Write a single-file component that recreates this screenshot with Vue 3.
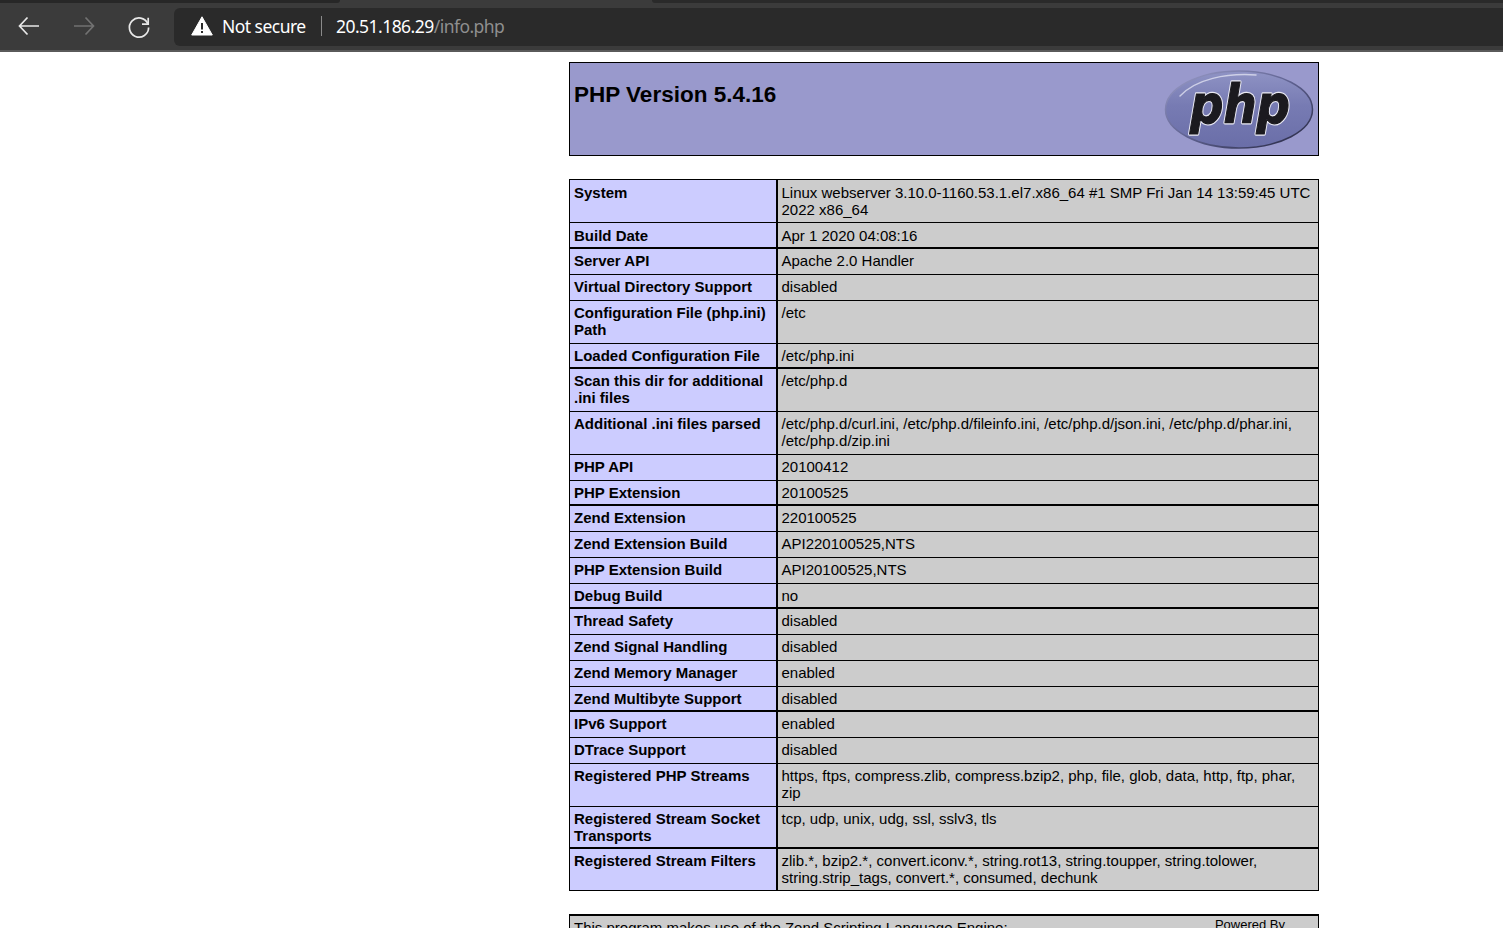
<script setup>
const rows = [
  { k: 'System', v: 'Linux webserver 3.10.0-1160.53.1.el7.x86_64 #1 SMP Fri Jan 14 13:59:45 UTC 2022 x86_64', h: 43 },
  { k: 'Build Date', v: 'Apr 1 2020 04:08:16', h: 25, thick: true },
  { k: 'Server API', v: 'Apache 2.0 Handler', h: 27 },
  { k: 'Virtual Directory Support', v: 'disabled', h: 26 },
  { k: 'Configuration File (php.ini) Path', v: '/etc', h: 43 },
  { k: 'Loaded Configuration File', v: '/etc/php.ini', h: 24, thick: true },
  { k: 'Scan this dir for additional .ini files', v: '/etc/php.d', h: 44 },
  { k: 'Additional .ini files parsed', v: '/etc/php.d/curl.ini, /etc/php.d/fileinfo.ini, /etc/php.d/json.ini, /etc/php.d/phar.ini, /etc/php.d/zip.ini', h: 43 },
  { k: 'PHP API', v: '20100412', h: 26 },
  { k: 'PHP Extension', v: '20100525', h: 24, thick: true },
  { k: 'Zend Extension', v: '220100525', h: 27 },
  { k: 'Zend Extension Build', v: 'API220100525,NTS', h: 26 },
  { k: 'PHP Extension Build', v: 'API20100525,NTS', h: 26 },
  { k: 'Debug Build', v: 'no', h: 24, thick: true },
  { k: 'Thread Safety', v: 'disabled', h: 27 },
  { k: 'Zend Signal Handling', v: 'disabled', h: 26 },
  { k: 'Zend Memory Manager', v: 'enabled', h: 26 },
  { k: 'Zend Multibyte Support', v: 'disabled', h: 24, thick: true },
  { k: 'IPv6 Support', v: 'enabled', h: 27 },
  { k: 'DTrace Support', v: 'disabled', h: 26 },
  { k: 'Registered PHP Streams', v: 'https, ftps, compress.zlib, compress.bzip2, php, file, glob, data, http, ftp, phar, zip', h: 43 },
  { k: 'Registered Stream Socket Transports', v: 'tcp, udp, unix, udg, ssl, sslv3, tls', h: 41, thick: true },
  { k: 'Registered Stream Filters', v: 'zlib.*, bzip2.*, convert.iconv.*, string.rot13, string.toupper, string.tolower, string.strip_tags, convert.*, consumed, dechunk', h: 43 },
]
</script>

<template>
  <div class="page">
    <header class="chrome">
      <div class="strip">
        <div class="tab-a"></div>
        <div class="tab-gap"></div>
        <div class="tab-b"></div>
      </div>
      <div class="toolbar">
        <svg class="nav" width="30" height="30" viewBox="0 0 30 30" fill="none" stroke="#e8e8e8" stroke-width="1.7">
          <path d="M25 15H5.500M13.500 6.500 5.500 15l8 8.500" />
        </svg>
        <svg class="nav" width="30" height="30" viewBox="0 0 30 30" fill="none" stroke="#727272" stroke-width="1.7">
          <path d="M5 15h19.500M16.500 6.500l8 8.500-8 8.500" />
        </svg>
        <svg class="nav" width="30" height="30" viewBox="0 0 30 30" fill="none" stroke="#e8e8e8" stroke-width="1.7">
          <path d="M23.800 12.700A9.600 9.600 0 1 0 24.600 16.500" />
          <path d="M24.200 6.800v6.300H18" />
        </svg>
        <div class="omnibox">
          <svg class="warn" width="22" height="20" viewBox="0 0 22 20">
            <path d="M11 .8 21.300 19H.7z" fill="#fff" stroke="#fff" stroke-linejoin="round" />
            <path d="M10 7h2v6.500h-2zM10 15h2v2h-2z" fill="#2a2a2a" />
          </svg>
          <span class="secure">Not secure</span>
          <span class="sep"></span>
          <span class="url">20.51.186.29<span class="path">/info.php</span></span>
        </div>
      </div>
      <div class="edge"></div>
    </header>

    <main class="center">
      <table class="head">
        <tbody>
          <tr>
            <td>
              <div class="head-in">
                <h1>PHP Version 5.4.16</h1>
                <svg class="logo" width="150" height="80" viewBox="0 0 150 80">
                  <defs>
                    <linearGradient id="egg" x1="0" y1="0" x2="0" y2="1">
                      <stop offset="0" stop-color="#8f93c4" />
                      <stop offset="0.45" stop-color="#777bb3" />
                      <stop offset="1" stop-color="#6a6ea8" />
                    </linearGradient>
                    <linearGradient id="rim" x1="0" y1="0" x2="1" y2="1">
                      <stop offset="0" stop-color="#9d9fcb" />
                      <stop offset="0.5" stop-color="#5e6190" />
                      <stop offset="1" stop-color="#23243d" />
                    </linearGradient>
                  </defs>
                  <ellipse cx="75" cy="39.500" rx="73.500" ry="38.500" fill="url(#egg)" stroke="url(#rim)" stroke-width="1.500" />
                  <path d="M16 26C32 9 62 3 92 5" fill="none" stroke="#dfe0f0" stroke-width="1.500" stroke-linecap="round" opacity="0.8" />
                  <text class="logo-back" x="26" y="53" textLength="100" lengthAdjust="spacingAndGlyphs">php</text>
                  <text class="logo-word" x="26" y="53" textLength="100" lengthAdjust="spacingAndGlyphs">php</text>
                </svg>
              </div>
            </td>
          </tr>
        </tbody>
      </table>

      <table class="info">
        <colgroup>
          <col class="c1" />
          <col />
        </colgroup>
        <tbody>
          <tr v-for="r in rows" :key="r.k" :class="{ thick: r.thick }" :style="{ height: r.h + 'px' }">
            <td class="e">{{ r.k }}</td>
            <td class="v">{{ r.v }}</td>
          </tr>
        </tbody>
      </table>

      <div class="foot">
        <div class="foot-text">This program makes use of the Zend Scripting Language Engine:<br />Zend Engine v2.4.0, Copyright (c) 1998-2013 Zend Technologies</div>
        <div class="foot-side">Powered By</div>
      </div>
    </main>
  </div>
</template>

<style>
html, body {
  margin: 0;
  background: #fff;
  overflow: hidden;
}
</style>

<style scoped>
.page {
  height: 928px;
  overflow: hidden;
  background: #fff;
}

.chrome {
  background: #3b3b3b;
  height: 52px;
  display: flex;
  flex-direction: column;
}
.strip {
  display: flex;
  height: 3px;
  flex: none;
}
.tab-a { width: 340px; background: #272727; border-bottom-right-radius: 3px; }
.tab-gap { width: 312px; }
.tab-b { flex: 1; background: #2a2a2a; border-bottom-left-radius: 3px; }
.toolbar {
  flex: 1;
  display: flex;
  align-items: flex-start;
  padding: 5px 0 0 14px;
}
.nav { flex: none; margin-top: 3px; margin-right: 25px; }
.nav:nth-child(3) { margin-right: 20px; }
.omnibox {
  flex: 1;
  height: 38px;
  box-sizing: border-box;
  padding-bottom: 2px;
  background: #2a2a2a;
  border-radius: 6px 0 0 6px;
  display: flex;
  align-items: center;
  font-family: "Noto Sans", "Open Sans", sans-serif;
  font-size: 17.500px;
  letter-spacing: -0.54px;
  color: #fff;
}
.warn { margin-left: 17px; flex: none; }
.secure { margin-left: 9px; width: 84px; white-space: nowrap; }
.sep { width: 1px; height: 20px; background: #8a8a8a; margin: 0 14px 0 15px; flex: none; }
.url { white-space: nowrap; }
.path { color: #8f8f8f; }
.edge { height: 2px; background: #5a5a5a; flex: none; }

.center {
  width: 750px;
  margin-left: 569px;
  font-family: "Liberation Sans", Arial, sans-serif;
  font-size: 15px;
  line-height: 17px;
  color: #000;
}

table {
  border-collapse: collapse;
  width: 750px;
  table-layout: fixed;
}
td {
  border: 1px solid #000;
  padding: 3px 4px 0 4px;
  vertical-align: top;
}
.info tr:nth-child(-n+2) td { padding-top: 4px; }

.head { margin-top: 10px; }
.head td {
  background: #9999cc;
  padding: 0;
  height: 92px;
}
.head-in {
  display: flex;
  justify-content: space-between;
  align-items: flex-start;
  padding: 0 4px 0 4px;
}
h1 {
  margin: 18px 0 0;
  font-size: 22.500px;
  line-height: 28px;
  font-weight: bold;
}
.logo { display: block; margin-top: 7px; }
.logo-word, .logo-back {
  font-family: "DejaVu Sans", sans-serif;
  font-weight: bold;
  font-style: italic;
  font-size: 54px;
}
.logo-back {
  fill: #e8e8f2;
  stroke: #e8e8f2;
  stroke-width: 3.500px;
  stroke-linejoin: round;
}
.logo-word {
  fill: #1b1a1f;
  stroke: #1b1a1f;
  stroke-width: 1.200px;
}

.info { margin-top: 23px; }
.c1 { width: 207px; }
.e { background: #ccccff; font-weight: bold; border-right-width: 2px; }
.v { background: #cccccc; border-left-width: 2px; }
.thick td { border-bottom-width: 2px; }

.foot {
  margin-top: 23px;
  height: 100px;
  box-sizing: border-box;
  border: 1px solid #000;
  border-top-width: 2px;
  background: #cccccc;
  display: flex;
  justify-content: space-between;
  padding: 3px 33px 0 4px;
}
.foot-side { font-size: 13px; margin-top: -3px; }
</style>
